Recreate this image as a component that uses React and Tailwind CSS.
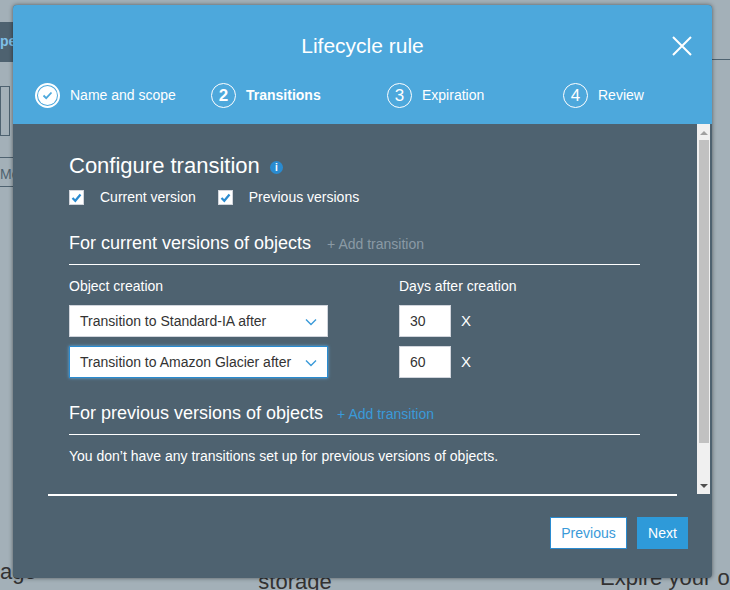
import React from "react";

const Chevron = () => (
  <svg width="12" height="8" viewBox="0 0 12 8" className="absolute right-[10px] top-[12px]">
    <path d="M1 1.5 L6 6.5 L11 1.5" fill="none" stroke="#3a9ad9" strokeWidth="1.4" />
  </svg>
);

const Check = () => (
  <span className="w-[15px] h-[15px] bg-white border border-gray-300 flex items-center justify-center">
    <svg width="11" height="10" viewBox="0 0 11 10"><path d="M1.5 5 L4.3 7.8 L9.5 1.5" fill="none" stroke="#2a8bd0" strokeWidth="2.2" /></svg>
  </span>
);

const Step = ({ n, label, bold, done }) => (
  <div className="flex items-center gap-[10px]">
    <span className={`w-[25px] h-[25px] rounded-full border-white flex items-center justify-center text-white ${done ? "border-[2px]" : "border-[1.5px]"}`}>
      {done ? (
        <span className="w-[19px] h-[19px] rounded-full bg-white flex items-center justify-center">
          <svg width="11" height="9" viewBox="0 0 11 9"><path d="M1.5 4.5 L4.2 7.2 L9.5 1.5" fill="none" stroke="#4da8dc" strokeWidth="1.8" /></svg>
        </span>
      ) : (
        <span className={`text-[17px] leading-none ${bold ? "font-bold" : ""}`}>{n}</span>
      )}
    </span>
    <span className={`text-[14px] text-white ${bold ? "font-bold" : ""}`}>{label}</span>
  </div>
);

export default function App() {
  return (
    <div className="relative w-[730px] h-[590px] bg-[#a3b0b8] overflow-hidden" style={{ fontFamily: '"Liberation Sans", Arial, sans-serif' }}>
      <div className="absolute left-0 top-[22px] w-[20px] h-[40px] bg-[#4e6270] text-[#7fc0e8] font-bold text-[14px] pt-[9px]">pe</div>
      <div className="absolute left-0 top-[86px] w-[10px] h-[50px] border border-[#4e6270]"></div>
      <div className="absolute left-0 top-[157px] w-[20px] h-[30px] border-y border-[#4e6270] text-[#4e6270] text-[14px] pt-[6px]">Mo</div>
      <div className="absolute left-[700px] top-[59px] w-[30px] border-t border-[#4e6270]"></div>
      <div className="absolute left-0 top-[560px] text-[22px] leading-[24px] text-[#333]">age</div>
      <div className="absolute left-[155px] top-[552px] w-[280px] text-center text-[22px] leading-[20px] text-[#333]">Automate transition to tiered storage</div>
      <div className="absolute left-[600px] top-[566px] text-[22px] leading-[24px] text-[#333] whitespace-nowrap">Expire your o</div>

      <div className="absolute left-[13px] top-[5px] w-[699px] h-[573px] rounded-[4px] overflow-hidden bg-[#4e6270] shadow-[0_0_4px_rgba(0,0,0,0.5)] flex flex-col">
        <div className="h-[119px] bg-[#4da8dc] relative shrink-0">
          <div className="text-center text-white text-[21px] pt-[25px]">Lifecycle rule</div>
          <svg className="absolute right-[20px] top-[31px]" width="20" height="20" viewBox="0 0 20 20"><path d="M1 1 L19 19 M19 1 L1 19" stroke="white" strokeWidth="2" /></svg>
          <div className="flex mt-[21px] pl-[22px]">
            <div className="w-[176px]"><Step label="Name and scope" done /></div>
            <div className="w-[176px]"><Step n="2" label="Transitions" bold /></div>
            <div className="w-[176px]"><Step n="3" label="Expiration" /></div>
            <div><Step n="4" label="Review" /></div>
          </div>
        </div>
        <div className="flex h-[370px] shrink-0">
          <div className="flex-1 pl-[56px] pr-[57px] pt-[29px] text-white">
            <div className="flex items-center gap-[10px]">
              <span className="text-[22px] leading-[26px]">Configure transition</span>
              <span className="w-[13px] h-[13px] rounded-full bg-[#2a8bd0] text-white text-[10px] font-bold flex items-center justify-center mt-[3px]">i</span>
            </div>
            <div className="flex items-center mt-[8px] text-[14px]">
              <Check /><span className="ml-[16px]">Current version</span>
              <span className="ml-[22px]"><Check /></span><span className="ml-[16px]">Previous versions</span>
            </div>
            <div className="flex items-baseline mt-[22px] pb-[7px] border-b border-white">
              <span className="text-[18px]">For current versions of objects</span>
              <span className="ml-[16px] text-[14px] text-[#8a9aa5]">+ Add transition</span>
            </div>
            <div className="flex text-[14px] mt-[11px]">
              <span className="w-[330px]">Object creation</span><span>Days after creation</span>
            </div>
            <div className="flex items-center mt-[8px]">
              <div className="relative w-[259px] h-[32px] bg-white border border-gray-300 text-[#333] text-[14px] pl-[10px] leading-[30px]">Transition to Standard-IA after<Chevron /></div>
              <div className="ml-[71px] w-[52px] h-[32px] bg-white border border-gray-300 text-[#333] text-[14px] pl-[10px] leading-[30px]">30</div>
              <span className="ml-[10px] text-[15px]">X</span>
            </div>
            <div className="flex items-center mt-[9px]">
              <div className="relative w-[259px] h-[32px] bg-white border border-[#2a8bd0] shadow-[0_0_3px_#5fb0e8] text-[#333] text-[14px] pl-[10px] leading-[30px]">Transition to Amazon Glacier after<Chevron /></div>
              <div className="ml-[71px] w-[52px] h-[32px] bg-white border border-gray-300 text-[#333] text-[14px] pl-[10px] leading-[30px]">60</div>
              <span className="ml-[10px] text-[15px]">X</span>
            </div>
            <div className="flex items-baseline mt-[22px] pb-[7px] border-b border-white">
              <span className="text-[18px]">For previous versions of objects</span>
              <span className="ml-[14px] text-[14px] text-[#3a9ad9]">+ Add transition</span>
            </div>
            <div className="text-[14px] mt-[11px]">You don’t have any transitions set up for previous versions of objects.</div>
          </div>
          <div className="w-[13px] bg-[#f0f0f0] mr-[2px] flex flex-col items-center">
            <svg width="8" height="6" className="mt-[6px]"><path d="M0 5 L4 1 L8 5Z" fill="#a0a0a0" /></svg>
            <div className="w-[10px] flex-1 bg-[#c1c1c1] mt-[4px] mb-[40px]"></div>
            <svg width="8" height="6" className="mb-[5px]"><path d="M0 1 L4 5 L8 1Z" fill="#505050" /></svg>
          </div>
        </div>
        <div className="mx-[35px] border-t-2 border-white"></div>
        <div className="flex justify-end gap-[10px] pr-[24px] pt-[21px]">
          <button className="w-[77px] h-[32px] bg-white border border-[#2a8bd0] text-[#3a9ad9] text-[14px]">Previous</button>
          <button className="w-[51px] h-[32px] bg-[#2e9ad9] text-white text-[14px]">Next</button>
        </div>
      </div>
    </div>
  );
}
